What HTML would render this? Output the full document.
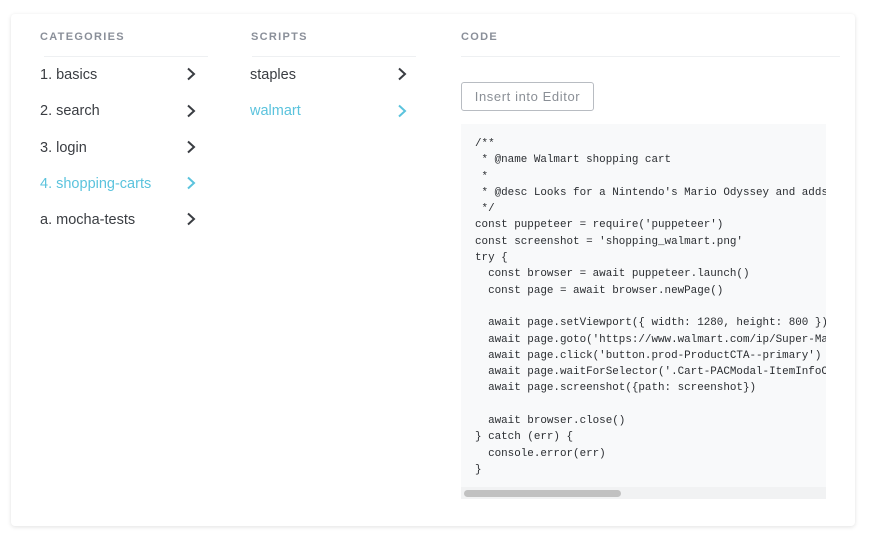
<!DOCTYPE html>
<html><head><style>
*{margin:0;padding:0;box-sizing:border-box}
body{width:880px;height:540px;background:#fff;font-family:"Liberation Sans",sans-serif;position:relative;overflow:hidden}
.card{position:absolute;left:11px;top:14px;width:844px;height:512px;background:#fff;border-radius:4px;box-shadow:0 1px 4px rgba(0,0,0,.12)}
.h{position:absolute;top:31px;font-size:11px;font-weight:bold;letter-spacing:1.3px;color:#8a8f99}
.line{position:absolute;top:56px;height:1px;background:#eef0f2}
.it{position:absolute;font-size:14.5px;color:#3a3d42}
.it.a{color:#5bc3dd}
.ch{position:absolute;width:14px;height:14px}
.btn{position:absolute;left:461px;top:82px;width:133px;height:29px;border:1px solid #b8bcc2;border-radius:3px;font-size:13px;letter-spacing:.6px;color:#8a8f96;line-height:27px;text-align:center}
.code{position:absolute;left:461px;top:124px;width:365px;height:375px;background:#f8f9fa;overflow:hidden}
pre{position:absolute;left:14px;top:12px;font-family:"Liberation Mono",monospace;font-size:10.9px;line-height:16.3px;color:#2a2d31;white-space:pre}
.track{position:absolute;left:0;bottom:0;width:365px;height:12px;background:#f1f2f3}
.thumb{position:absolute;left:3px;top:3px;width:157px;height:7px;border-radius:4px;background:#c1c1c1}
</style></head><body>
<div class="card"></div>
<div class="h" style="left:40px">CATEGORIES</div>
<div class="h" style="left:251px">SCRIPTS</div>
<div class="h" style="left:461px">CODE</div>
<div class="line" style="left:44px;width:164px"></div>
<div class="line" style="left:252px;width:164px"></div>
<div class="line" style="left:461px;width:379px"></div>

<div class="it" style="left:40px;top:67px">1. basics</div>
<div class="it" style="left:40px;top:103px">2. search</div>
<div class="it" style="left:40px;top:140px">3. login</div>
<div class="it a" style="left:40px;top:176px">4. shopping-carts</div>
<div class="it" style="left:40px;top:212px">a. mocha-tests</div>
<div class="it" style="left:250px;top:67px">staples</div>
<div class="it a" style="left:250px;top:103px">walmart</div>

<svg class="ch" style="left:184px;top:67px" viewBox="0 0 14 14"><path d="M4 1.5L10 7L4 12.5" fill="none" stroke="#3a3d42" stroke-width="2"/></svg>
<svg class="ch" style="left:184px;top:104px" viewBox="0 0 14 14"><path d="M4 1.5L10 7L4 12.5" fill="none" stroke="#3a3d42" stroke-width="2"/></svg>
<svg class="ch" style="left:184px;top:140px" viewBox="0 0 14 14"><path d="M4 1.5L10 7L4 12.5" fill="none" stroke="#3a3d42" stroke-width="2"/></svg>
<svg class="ch" style="left:184px;top:176px" viewBox="0 0 14 14"><path d="M4 1.5L10 7L4 12.5" fill="none" stroke="#5bc3dd" stroke-width="2"/></svg>
<svg class="ch" style="left:184px;top:212px" viewBox="0 0 14 14"><path d="M4 1.5L10 7L4 12.5" fill="none" stroke="#3a3d42" stroke-width="2"/></svg>
<svg class="ch" style="left:395px;top:67px" viewBox="0 0 14 14"><path d="M4 1.5L10 7L4 12.5" fill="none" stroke="#3a3d42" stroke-width="2"/></svg>
<svg class="ch" style="left:395px;top:104px" viewBox="0 0 14 14"><path d="M4 1.5L10 7L4 12.5" fill="none" stroke="#5bc3dd" stroke-width="2"/></svg>

<div class="btn">Insert into Editor</div>
<div class="code"><pre>/**
 * @name Walmart shopping cart
 *
 * @desc Looks for a Nintendo's Mario Odyssey and adds it to the cart
 */
const puppeteer = require('puppeteer')
const screenshot = 'shopping_walmart.png'
try {
  const browser = await puppeteer.launch()
  const page = await browser.newPage()

  await page.setViewport({ width: 1280, height: 800 })
  await page.goto('https://www.walmart.com/ip/Super-Mario-Odyssey')
  await page.click('button.prod-ProductCTA--primary')
  await page.waitForSelector('.Cart-PACModal-ItemInfoContainer')
  await page.screenshot({path: screenshot})

  await browser.close()
} catch (err) {
  console.error(err)
}</pre><div class="track"><div class="thumb"></div></div></div>
</body></html>
